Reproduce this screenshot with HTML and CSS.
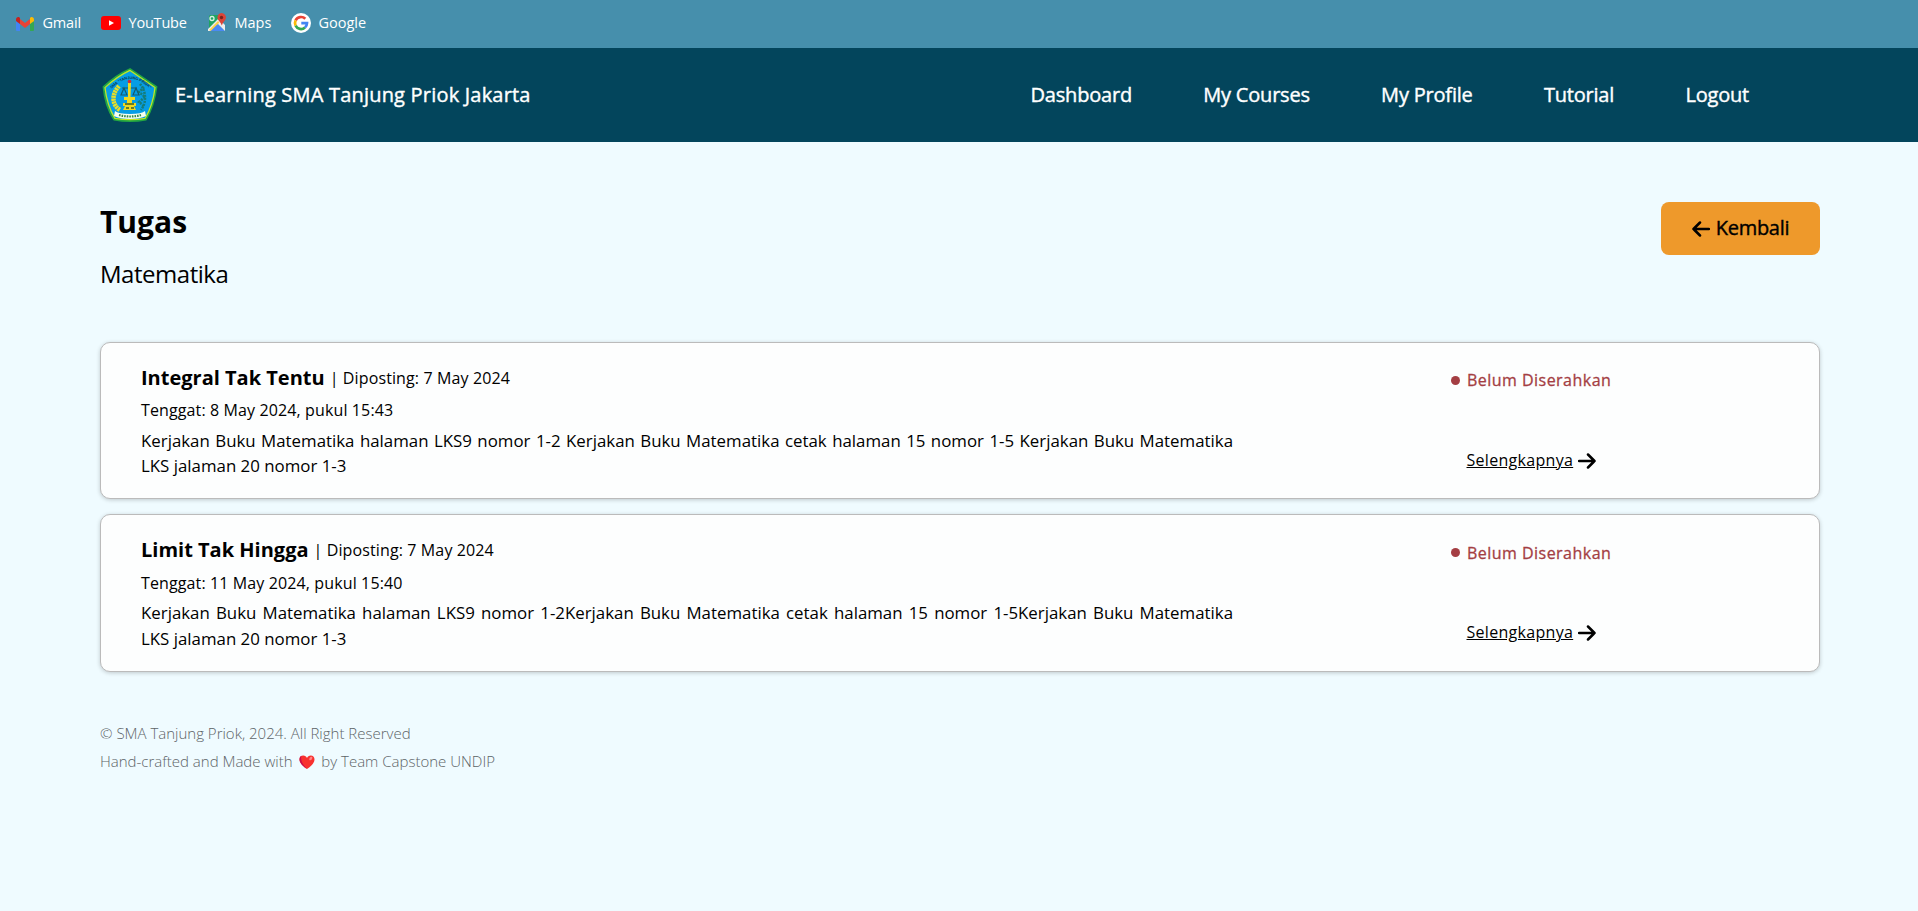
FILE: index.html
```html
<!DOCTYPE html>
<html lang="id">
<head>
<meta charset="utf-8">
<title>Tugas - E-Learning SMA Tanjung Priok Jakarta</title>
<link rel="stylesheet" href="styles.css">
</head>
<body>
<div class="bookmarks">
  <a class="bookmark gmail"><svg width="20" height="20" viewBox="0 0 20 20"><path fill="#4285f4" d="M1 8l4 3v7H2a1 1 0 0 1-1-1z"/><path fill="#34a853" d="M19 8l-4 3v7h3a1 1 0 0 0 1-1z"/><path fill="#ea4335" d="M5 6l5 4 5-4v5l-5 4-5-4z"/><path fill="#c5221f" d="M1 6.500c0-2 2-3 3.500-2L5 5v6L1 8z"/><path fill="#fbbc04" d="M19 6.500c0-2-2-3-3.500-2L15 5v6l4-3z"/></svg><span>Gmail</span></a>
  <a class="bookmark youtube"><svg width="20" height="20" viewBox="0 0 20 20"><rect y="3" width="20" height="14" rx="3" fill="#f00"/><path fill="#fff" d="M8 7.300v5.400l5-2.700z"/></svg><span>YouTube</span></a>
  <a class="bookmark maps"><svg width="20" height="20" viewBox="0 0 20 20"><path fill="#1fa463" d="M3 2h13L2 16V3z"/><path fill="#4a89f3" d="M10 10l8 8H2z"/><path fill="#eee" d="M10 10l3-3 5 5v6zM1 16L13 4l2 2L3 18H1z"/><path fill="#fdd14b" d="M2 17L11 8l1.500 1.500L4 18z"/><path fill="#4a89f3" d="M10 12l6 6H4z"/><circle cx="5" cy="5.500" r="2" fill="none" stroke="#d8f2e4" stroke-width="1.300"/><path fill="#db4437" d="M14.500 0a4.500 4.500 0 0 1 4.300 5.500c-.5 2-3 3.500-4 7-1-3.500-3.800-5-4.200-7A4.500 4.500 0 0 1 14.500 0z"/><circle cx="14.500" cy="4.500" r="1.700" fill="#7b231c"/></svg><span>Maps</span></a>
  <a class="bookmark google"><svg width="20" height="20" viewBox="0 0 20 20"><circle cx="10" cy="10" r="10" fill="#fff"/><g fill="none" stroke-width="2.700"><path stroke="#ea4335" d="M4.600 7.400A6 6 0 0 1 14.300 5.800"/><path stroke="#fbbc05" d="M4.600 12.600A6 6 0 0 1 4.600 7.400"/><path stroke="#34a853" d="M4.600 12.600A6 6 0 0 0 14 14.500"/><path stroke="#4285f4" d="M14 14.500A6 6 0 0 0 16 10.200H10.300"/></g></svg><span>Google</span></a>
</div>
<header class="navbar">
  <div class="brand">
    <svg class="crest" width="56" height="54" viewBox="0 0 56 54">
      <path d="M28 1L54.500 19Q52 38 44 51.500Q28 54.500 12 51.500Q3 38 1.500 19Q14 7 28 1z" fill="#069de5" stroke="#23a642" stroke-width="1.800"/>
      <path d="M28 2.400L53 19.600Q51 37 43.200 50.300Q28 53 12.800 50.300Q5 37 3 19.600Q15 8.500 28 2.400z" fill="none" stroke="#c5e71c" stroke-width="1.200"/>
      <path id="arc" d="M8 23Q28 -1 50 23" fill="none"/>
      <text class="crest-name" text-anchor="middle"><textPath href="#arc" startOffset="50%">SMA "TANJUNG PRIOK"</textPath></text>
      <path d="M17 18C9 27 10 37 18 42" fill="none" stroke="#e8df27" stroke-width="4.500" stroke-dasharray="2.200 .6"/>
      <path d="M38 16c6 7 7 18 1 26M42 19l-5 5 6 5-6 5 5 4" fill="none" stroke="#157d78" stroke-width="2.500" stroke-dasharray="2 1"/>
      <path d="M20 20h15M22 20l-3 7h6zM34 20l-3 7h6z" fill="none" stroke="#155c70" stroke-width="1.200"/>
      <path d="M26 15h3l-.5 14H33v3h-3v3h4v3h-2l2 4H21l2-4h-2v-3h4v-3h-3v-3h4z" fill="#efd921"/>
      <path d="M24 40h3m2 0h3M23 36h9" stroke="#3c5c26" stroke-width="1.500"/>
      <circle cx="27.500" cy="13.500" r="1.800" fill="#d12839"/>
      <path d="M13 43q3 3 15 3t15-3l1 5q-6 3-16 3t-16-3z" fill="#f7fff0"/>
      <path d="M17 47q11 3 22 0" fill="none" stroke="#36884a" stroke-width="2.200" stroke-dasharray="1.600 1"/>
    </svg>
    <span class="brand-name">E-Learning SMA Tanjung Priok Jakarta</span>
  </div>
  <nav class="menu"><a>Dashboard</a><a>My Courses</a><a>My Profile</a><a>Tutorial</a><a>Logout</a></nav>
</header>
<main class="page">
  <div class="heading">
    <div><h1>Tugas</h1><p class="subject">Matematika</p></div>
    <a class="back"><svg width="18" height="16" viewBox="0 0 18 16"><path class="arrow" d="M17 8H1.500M8 1.500L1.500 8 8 14.500"/></svg><span>Kembali</span></a>
  </div>
  <section class="tasks">
    <article class="card">
      <div class="details">
        <div class="title-row"><h2>Integral Tak Tentu</h2><span class="posted">| Diposting: 7 May 2024</span></div>
        <p class="due">Tenggat: 8 May 2024, pukul 15:43</p>
        <p class="description">Kerjakan Buku Matematika halaman LKS9 nomor 1-2 Kerjakan Buku Matematika cetak halaman 15 nomor 1-5 Kerjakan Buku Matematika LKS jalaman 20 nomor 1-3</p>
      </div>
      <div class="side"><p class="status"><i class="dot"></i>Belum Diserahkan</p><a class="more"><span>Selengkapnya</span><svg width="18" height="16" viewBox="0 0 18 16"><path class="arrow" d="M1 8h15.500M10 1.500L16.500 8 10 14.500"/></svg></a></div>
    </article>
    <article class="card">
      <div class="details">
        <div class="title-row"><h2>Limit Tak Hingga</h2><span class="posted">| Diposting: 7 May 2024</span></div>
        <p class="due">Tenggat: 11 May 2024, pukul 15:40</p>
        <p class="description">Kerjakan Buku Matematika halaman LKS9 nomor 1-2Kerjakan Buku Matematika cetak halaman 15 nomor 1-5Kerjakan Buku Matematika LKS jalaman 20 nomor 1-3</p>
      </div>
      <div class="side"><p class="status"><i class="dot"></i>Belum Diserahkan</p><a class="more"><span>Selengkapnya</span><svg width="18" height="16" viewBox="0 0 18 16"><path class="arrow" d="M1 8h15.500M10 1.500L16.500 8 10 14.500"/></svg></a></div>
    </article>
  </section>
  <footer class="footer">
    <p>© SMA Tanjung Priok, 2024. All Right Reserved</p>
    <p>Hand-crafted and Made with <svg class="heart" width="16" height="14" viewBox="0 0 16 14"><path fill="#f8312f" d="M8 14C4 11.500.5 8 .5 4.300.5 1.800 2.200.4 4.200.4 6 .4 7.400 1.400 8 2.900 8.600 1.400 10 .4 11.800.4c2 0 3.700 1.400 3.700 3.900C15.500 8 12 11.500 8 14z"/><path fill="#ca0b4a" d="M8 14C4 11.500.5 8 .5 4.300.5 2.600 1.300 1.400 2.500.8 1 5 4 10 8 14z"/><ellipse cx="11.800" cy="3.500" rx="1.300" ry="2" transform="rotate(35 11.800 3.500)" fill="#ff8687"/></svg> by Team Capstone UNDIP</p>
  </footer>
</main>
</body>
</html>
```
FILE: styles.css
```css
* { box-sizing: border-box; }
body { margin: 0; min-height: 911px; background: #effbff; color: #000; font-family: "Open Sans", sans-serif; font-size: 16px; }
h1, h2, p { margin: 0; }
.bookmarks { height: 48px; padding: 0 15px 3px; display: flex; align-items: center; background: #468fac; color: #fff; font-size: 14.500px; }
.bookmark { display: flex; align-items: center; gap: 7.500px; white-space: nowrap; }
.gmail { width: 86px; letter-spacing: -.2px; }
.youtube { width: 106px; letter-spacing: -.2px; }
.maps { width: 84px; }
.navbar { height: 94px; padding: 0 169px 2px 102px; display: flex; align-items: center; justify-content: space-between; background: #03455c; color: #fff; font-weight: 500; font-size: 20px; }
.brand { display: flex; align-items: center; gap: 17px; }
.crest { overflow: visible; transform: translateY(1px); }
.crest-name { font: bold 3.800px "Liberation Sans", sans-serif; fill: #0b3448; }
.brand-name { letter-spacing: .2px; -webkit-text-stroke: .4px #fff; }
.menu { display: flex; gap: 71.300px; letter-spacing: -.2px; -webkit-text-stroke: .4px #fff; }
.page { padding: 60px 98px 0 100px; }
.heading { height: 140px; display: flex; align-items: flex-start; justify-content: space-between; }
h1 { font-size: 30px; line-height: 40px; font-weight: 700; }
.subject { margin-top: 15px; font-size: 24px; line-height: 33px; letter-spacing: -.48px; }
.back { width: 159px; height: 53px; padding-bottom: 2px; display: flex; align-items: center; justify-content: center; gap: 6px; border-radius: 8px; background: #ee992b; font-size: 20px; font-weight: 500; letter-spacing: -.3px; -webkit-text-stroke: .4px #000; }
.back svg { transform: translateY(1px); }
.arrow { fill: none; stroke: #000; stroke-width: 2.500; stroke-linecap: round; stroke-linejoin: round; }
.tasks { display: flex; flex-direction: column; gap: 15px; }
.card { height: 157.450px; padding: 21px 40px 0; display: flex; border: 1px solid #bbb; border-radius: 10px; background: #fdfefe; box-shadow: 0 1px 4px rgba(0, 0, 0, .2); }
.details { width: 1092px; }
.title-row { display: flex; align-items: baseline; gap: 5px; line-height: 28px; }
.posted, .due { letter-spacing: .12px; }
.posted { position: relative; top: -1px; }
h2 { font-size: 20px; font-weight: 700; }
.due { margin-top: 5.200px; line-height: 24px; }
.description { margin-top: 5.700px; font-size: 16.850px; line-height: 25.500px; text-align: justify; }
.side { margin-left: 218px; }
.status { display: flex; align-items: center; gap: 7px; margin-top: 4.200px; line-height: 24px; font-weight: 500; color: #a43e43; letter-spacing: .47px; -webkit-text-stroke: .3px #a43e43; }
.dot { width: 9px; height: 9px; border-radius: 50%; background: #a43e43; }
.more { display: flex; align-items: center; gap: 5px; margin: 55.800px 0 0 15.500px; line-height: 24px; letter-spacing: .3px; }
.more span { text-decoration: underline; }
.more svg { transform: translateY(1px); }
.footer { margin-top: 47.100px; color: #5d6467; font-size: 15px; font-weight: 300; line-height: 28px; }
.heart { margin: 0 2px 0 3px; vertical-align: -2px; }
```
